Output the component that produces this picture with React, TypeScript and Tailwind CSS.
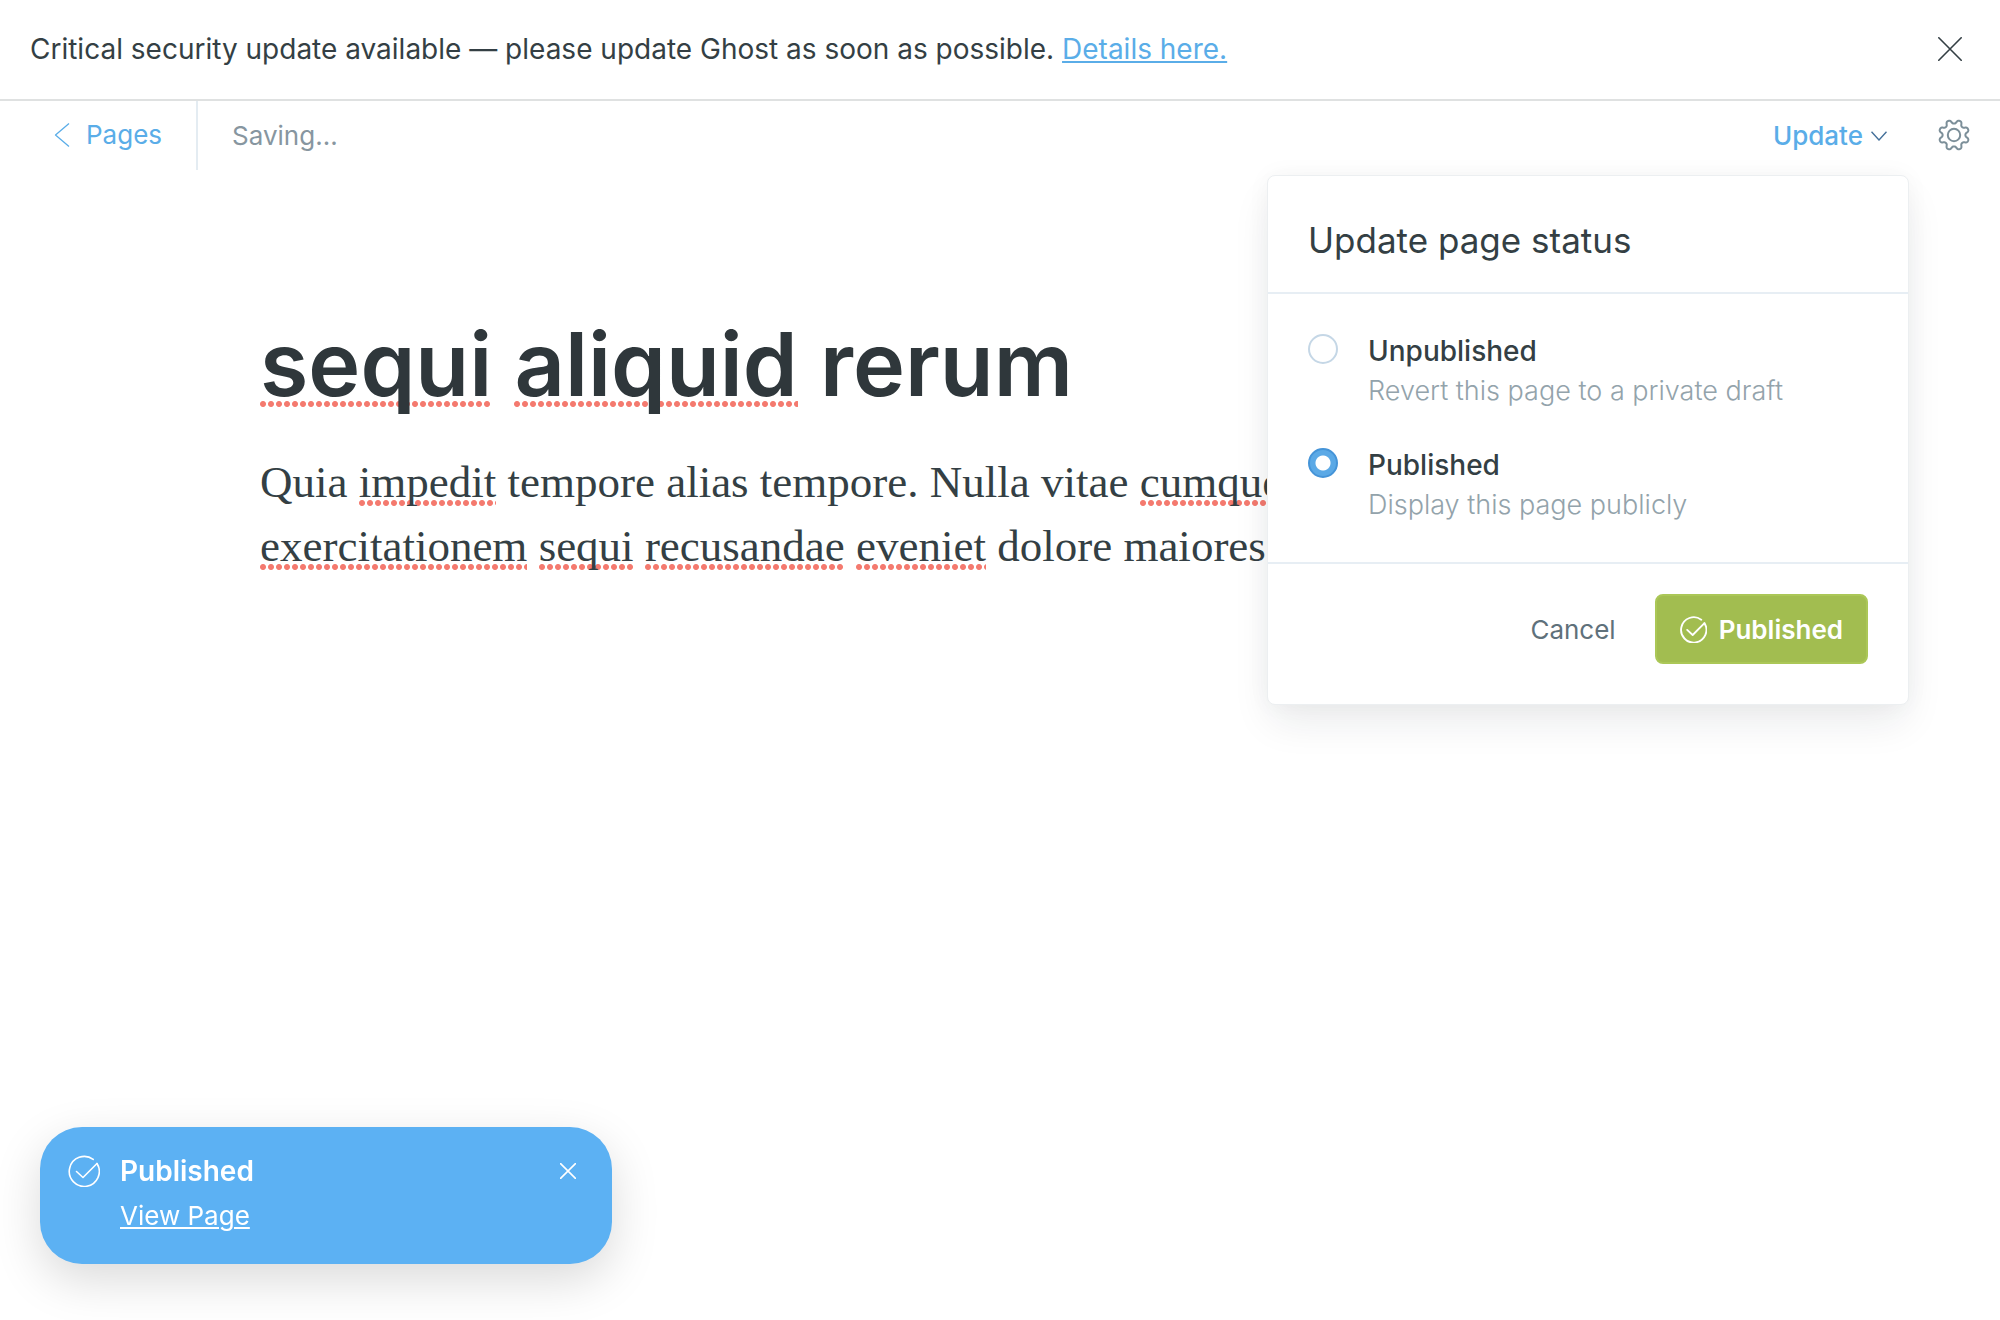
import { useState } from "react";

const MISSPELLED =
  "bg-[radial-gradient(circle_at_3px_3px,#f47a6f_2.5px,transparent_3.5px)] bg-[length:8px_6px] bg-repeat-x";

function Misspelled({ children, heading = false }: { children: string; heading?: boolean }) {
  return (
    <span className={`${MISSPELLED} ${heading ? "bg-[position:left_bottom_10px]" : "bg-[position:left_bottom_1px]"}`}>
      {children}
    </span>
  );
}

function CloseIcon({ className }: { className: string }) {
  return (
    <svg viewBox="0 0 24 24" fill="none" stroke="currentColor" className={className} aria-hidden="true">
      <path d="M.8.8l22.4 22.4M23.2.8L.8 23.2" strokeLinecap="round" />
    </svg>
  );
}

function CheckCircleIcon({ className }: { className: string }) {
  return (
    <svg viewBox="0 0 32 32" fill="none" stroke="currentColor" strokeLinecap="round" strokeLinejoin="round" className={className} aria-hidden="true">
      <path d="M25.2 4.4A15 15 0 1 0 29 8.5" />
      <path d="M8.5 16.5l6.5 6L29 8.5" />
    </svg>
  );
}

// Outline of an eight-toothed cog with rounded teeth, sampled around the circle.
const GEAR_OUTLINE =
  Array.from({ length: 240 }, (_, i) => {
    const angle = (i / 240) * 2 * Math.PI;
    const wave = -Math.cos(8 * angle);
    const radius = 13.3 + 1.9 * (Math.tanh(1.5 * wave) / Math.tanh(1.5));
    const x = 16 + radius * Math.sin(angle);
    const y = 16 - radius * Math.cos(angle);
    return `${i === 0 ? "M" : "L"}${x.toFixed(2)} ${y.toFixed(2)}`;
  }).join("") + "Z";

function GearIcon({ className }: { className: string }) {
  return (
    <svg viewBox="0 0 32 32" fill="none" stroke="currentColor" strokeLinejoin="round" className={className} aria-hidden="true">
      <circle cx="16" cy="16" r="6.2" />
      <path d={GEAR_OUTLINE} />
    </svg>
  );
}

const OPTIONS = [
  { id: "unpublished", title: "Unpublished", hint: "Revert this page to a private draft" },
  { id: "published", title: "Published", hint: "Display this page publicly" },
];

function StatusMenu() {
  const [status, setStatus] = useState("published");
  return (
    <form className="absolute top-full right-0 z-10 mt-[5px] w-[642px] rounded-lg border border-[#eceff1] bg-white shadow-[0_20px_40px_-4px_rgba(21,33,42,0.09),0_0_24px_rgba(21,33,42,0.04)]">
      <h2 className="border-b-2 border-[#e7eef4] px-10 pt-[42px] pb-[30px] text-[35px] leading-[44px] text-[#343f44]">Update page status</h2>
      <fieldset className="flex flex-col gap-[34px] border-b-2 border-[#e7eef4] px-10 py-[37px]">
        {OPTIONS.map((o) => (
          <label key={o.id} htmlFor={o.id} className="flex gap-[30px]">
            <input
              id={o.id}
              type="radio"
              name="status"
              checked={status === o.id}
              onChange={() => setStatus(o.id)}
              className="mt-[3px] size-[30px] shrink-0 appearance-none rounded-full border-2 border-[#c5d7e6] bg-white checked:border-[#4594d8] checked:bg-[radial-gradient(circle,#fff_7px,#5ba9e6_8px)]"
            />
            <span>
              <span className="block text-[28px] leading-10 font-medium text-[#343f44]">{o.title}</span>
              <span className="block text-[27px] leading-10 font-light text-[#93a3ab]">{o.hint}</span>
            </span>
          </label>
        ))}
      </fieldset>
      <div className="flex items-center justify-end gap-[39px] px-10 pt-[30px] pb-10 text-[26px]">
        <button type="button" className="text-[#5f717b]">Cancel</button>
        <button type="button" className="flex h-[70px] items-center gap-3 rounded-lg border-2 border-[#abc757] bg-[#a2bd50] px-[23px] font-semibold text-white">
          <CheckCircleIcon className="size-[27px] stroke-[2.2]" />
          Published
        </button>
      </div>
    </form>
  );
}

export default function App() {
  return (
    <div className="min-h-screen bg-white font-['Inter',sans-serif] text-[#343f44]">
      <aside className="flex items-center justify-between border-b-2 border-[#dfe1e1] pt-[29px] pr-[38px] pb-[30px] pl-[30px] text-[28px] leading-10">
        <p>
          Critical security update available — please update Ghost as soon as possible.{" "}
          <a href="#details" className="text-[#5aade8] underline decoration-2 underline-offset-2">Details here.</a>
        </p>
        <button type="button" aria-label="Close">
          <CloseIcon className="size-6 stroke-[1.6]" />
        </button>
      </aside>

      <header className="relative flex h-[69px] items-stretch pr-[30px] text-[26px]">
        <a href="#pages" className="flex items-center gap-4 border-r-2 border-[#e4ecf2] pr-[34px] pb-0.5 pl-[54px] text-[#5aade8]">
          <svg viewBox="0 0 16 24" fill="none" stroke="currentColor" className="h-6 w-4 stroke-[1.3]" aria-hidden="true">
            <path d="M15 .5L1.5 12 15 23.5" strokeLinejoin="round" />
          </svg>
          Pages
        </a>
        <span className="flex flex-1 items-center pl-[34px] text-[#8796a0]">Saving...</span>
        <div className="relative mr-[29px] flex items-center">
          <button type="button" className="mr-[22px] flex items-center gap-2 font-medium text-[#5aade8]">
            Update
            <svg viewBox="0 0 16 10" fill="none" stroke="#44709a" className="h-[10px] w-4 stroke-[1.4]" aria-hidden="true">
              <path d="M.5 .8L8 9l7.5-8.2" />
            </svg>
          </button>
          <StatusMenu />
        </div>
        <button type="button" aria-label="Settings" className="pb-0.5 text-[#7c8f99]">
          <GearIcon className="size-8 stroke-2" />
        </button>
      </header>

      <main className="mx-auto max-w-[1480px] pt-[139px]">
        <h1 className="text-[88px] leading-[110px] font-semibold text-[#2f373b]">
          <Misspelled heading>sequi</Misspelled> <Misspelled heading>aliquid</Misspelled> rerum
        </h1>
        <p className="mt-[31px] font-['Liberation_Serif',serif] text-[45px] leading-[64px]">
          Quia <Misspelled>impedit</Misspelled> tempore alias tempore. Nulla vitae <Misspelled>cumque</Misspelled>
          <br />
          <Misspelled>exercitationem</Misspelled> <Misspelled>sequi</Misspelled> <Misspelled>recusandae</Misspelled>{" "}
          <Misspelled>eveniet</Misspelled> dolore maiores
        </p>
      </main>

      <div role="status" className="fixed bottom-14 left-10 flex w-[572px] items-start rounded-[42px] bg-[#5cb1f3] pt-6 pr-9 pb-[23px] pl-7 text-white shadow-[0_16px_48px_rgba(0,0,0,0.15)]">
        <CheckCircleIcon className="mt-1 mr-5 size-8 stroke-[1.6]" />
        <div className="flex-1">
          <p className="text-[28px] leading-10 font-semibold">Published</p>
          <a href="#view" className="block text-[26px] leading-[50px] underline decoration-2 underline-offset-2">View Page</a>
        </div>
        <button type="button" aria-label="Dismiss" className="mt-3">
          <CloseIcon className="size-4 stroke-[2.4]" />
        </button>
      </div>
    </div>
  );
}
